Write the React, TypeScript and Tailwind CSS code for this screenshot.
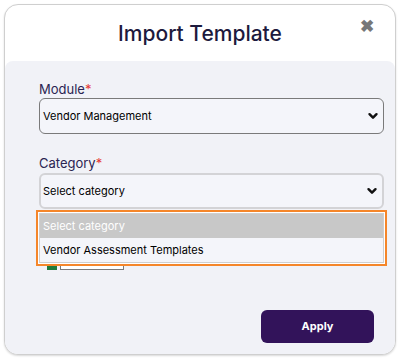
import { useState } from "react";

function Chevron() {
  return (
    <svg width="12" height="12" viewBox="0 0 12 12" className="shrink-0">
      <path d="M2.5 4.2 L6 7.7 L9.5 4.2" fill="none" stroke="#111" strokeWidth="2.4" strokeLinecap="round" strokeLinejoin="round" />
    </svg>
  );
}

export default function App() {
  const [module] = useState("Vendor Management");

  return (
    <div className="w-[400px] h-[360px] bg-white p-1 font-['Inter','Liberation_Sans',sans-serif]">
      <div className="h-[351px] flex flex-col rounded-[14px] border border-[#cfcfcf] shadow-[0_1px_2px_rgba(0,0,0,0.15)] overflow-hidden bg-white">
        {/* header */}
        <div className="relative h-[56px] shrink-0 flex items-center justify-center">
          <h2 className="text-[21px] font-medium text-[#1d1a3d] mt-[1px]">Import Template</h2>
          <button className="absolute right-[21px] top-[13px] text-[#777] text-[17px] leading-none font-bold">
            ✖
          </button>
        </div>

        {/* body */}
        <div className="flex-1 flex flex-col bg-[#f1f2f7] rounded-t-[8px] pl-[34px] pr-[11px] pt-[20px]">
          <label className="text-[13px] leading-4 text-[#2b2452]">
            Module<span className="text-[#e53935]">*</span>
          </label>
          <div className="mt-[1px] h-[36px] flex items-center justify-between rounded-[6px] border border-[#7a7a7a] bg-[#f4f5fa] pl-[3px] pr-[4px]">
            <span className="text-[11px] text-black">{module}</span>
            <Chevron />
          </div>

          <label className="mt-[21px] text-[13px] leading-4 text-[#2b2452]">
            Category<span className="text-[#e53935]">*</span>
          </label>
          <div className="relative mt-[2px]">
            <div className="h-[36px] flex items-center justify-between rounded-[6px] border-2 border-[#d3d3d6] bg-[#f4f5fa] pl-[2px] pr-[4px]">
              <span className="text-[11px] text-black">Select category</span>
              <Chevron />
            </div>

            {/* hidden row under the list */}
            <div className="flex items-end gap-[3px] mt-[41px] ml-[8px] h-[20px]">
              <div className="w-[10px] h-[8px] bg-[#1f7a3c]" />
              <div className="w-[64px] h-[20px] border border-[#7a7a7a] bg-white" />
            </div>

            {/* open list */}
            <div className="absolute left-[-3px] right-[-3px] top-[37px] border-2 border-[#f5862a] bg-white p-[1px]">
              <div className="border border-[#cfcfcf]">
                <div className="h-[24px] flex items-center bg-[#c8c8c8] pl-[3px] text-[11px] text-white">
                  Select category
                </div>
                <div className="h-[24px] flex items-center bg-[#f4f5fa] pl-[3px] text-[11px] text-black">
                  Vendor Assessment Templates
                </div>
              </div>
            </div>
          </div>

          <div className="flex-1" />
          <div className="flex justify-end pr-[10px] pb-[11px]">
            <button className="w-[113px] h-[33px] rounded-[6px] bg-[#32135a] text-white text-[11px] font-bold">
              Apply
            </button>
          </div>
        </div>
      </div>
    </div>
  );
}
